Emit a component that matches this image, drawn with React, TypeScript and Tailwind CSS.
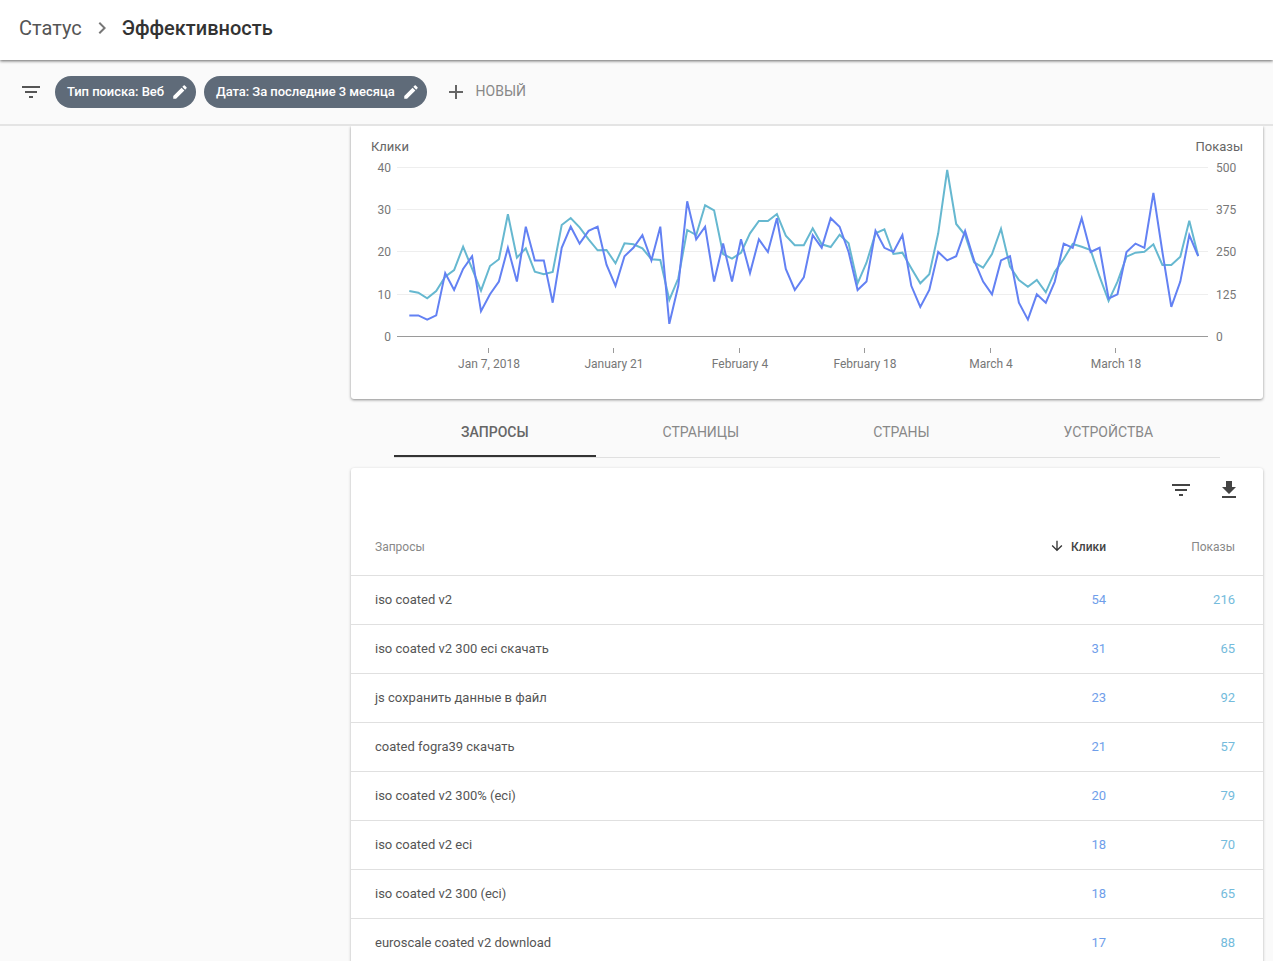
const clicks = [
  5, 5, 4, 5, 15, 11, 16, 19, 6, 10, 13, 21, 13, 26, 18, 18, 8, 21, 26, 22, 25, 26, 17, 12, 19, 21, 24, 18, 26, 3, 12, 32, 23, 26, 13,
  22, 13, 23, 15, 23, 20, 28, 16, 11, 14, 24, 21, 28, 26, 20, 11, 13, 25, 21, 20, 24, 12, 7, 11, 20, 18, 19, 25, 18, 13, 10, 18, 19, 8,
  4, 10, 8, 13, 22, 21, 28, 20, 21, 9, 10, 20, 22, 21, 34, 20, 7, 13, 24, 19,
];

// line height inside the chart, px from the top of the card
const impressions = [
  483, 488, 505, 483, 440, 420, 350, 416, 482, 408, 388, 253, 383, 355, 425, 433, 426, 285, 264, 292, 328, 361, 360, 400, 340, 343, 355,
  388, 390, 510, 445, 300, 315, 226, 241, 372, 386, 368, 310, 273, 273, 252, 317, 346, 346, 295, 343, 351, 314, 340, 460, 398, 310, 298,
  372, 368, 415, 460, 433, 310, 120, 282, 315, 397, 413, 372, 296, 410, 450, 470, 450, 487, 425, 387, 342, 350, 360, 440, 513, 455, 380,
  368, 365, 343, 405, 405, 380, 272, 378,
].map((z) => 4 + z / 3);

const stepX = 8.965;
const startX = 58.3;
const xAt = (i: number) => (startX + i * stepX).toFixed(1);
const clickLine = clicks.map((v, i) => `${xAt(i)},${(210.5 - v * 4.225).toFixed(1)}`).join(' ');
const impressionLine = impressions.map((y, i) => `${xAt(i)},${y.toFixed(1)}`).join(' ');

const grid = [
  { y: 41.5, left: '40', right: '500' },
  { y: 83.5, left: '30', right: '375' },
  { y: 125.5, left: '20', right: '250' },
  { y: 168.5, left: '10', right: '125' },
];

const ticks = [
  { x: 138, label: 'Jan 7, 2018' },
  { x: 263, label: 'January 21' },
  { x: 389, label: 'February 4' },
  { x: 514, label: 'February 18' },
  { x: 640, label: 'March 4' },
  { x: 765, label: 'March 18' },
];

const rows = [
  { query: 'iso coated v2', clicks: 54, views: 216 },
  { query: 'iso coated v2 300 eci скачать', clicks: 31, views: 65 },
  { query: 'js сохранить данные в файл', clicks: 23, views: 92 },
  { query: 'coated fogra39 скачать', clicks: 21, views: 57 },
  { query: 'iso coated v2 300% (eci)', clicks: 20, views: 79 },
  { query: 'iso coated v2 eci', clicks: 18, views: 70 },
  { query: 'iso coated v2 300 (eci)', clicks: 18, views: 65 },
  { query: 'euroscale coated v2 download', clicks: 17, views: 88 },
];

const tabs = ['ЗАПРОСЫ', 'СТРАНИЦЫ', 'СТРАНЫ', 'УСТРОЙСТВА'];

function Icon({ d, className }: { d: string; className: string }) {
  return (
    <svg viewBox="0 0 24 24" className={className} fill="currentColor">
      <path d={d} />
    </svg>
  );
}

const filterPath = 'M10 18h4v-2h-4v2zM3 6v2h18V6H3zm3 7h12v-2H6v2z';
const editPath =
  'M3 17.25V21h3.75L17.81 9.94l-3.75-3.75L3 17.25zM20.71 7.04c.39-.39.39-1.02 0-1.41l-2.34-2.34c-.39-.39-1.02-.39-1.41 0l-1.83 1.83 3.75 3.75 1.83-1.83z';

function Chip({ label }: { label: string }) {
  return (
    <div className="flex h-8 items-center rounded-full bg-[#5f6b79] pl-[12px] pr-[7px] text-[13px] font-medium tracking-[-0.05px] text-white">
      <span>{label}</span>
      <Icon d={editPath} className="ml-[7px] h-[18px] w-[18px]" />
    </div>
  );
}

function Chart() {
  return (
    <div className="h-[273px] w-[912px] rounded-b-[3px] bg-white shadow-[0_1px_3px_rgba(0,0,0,0.45)]">
      <svg width="912" height="273" viewBox="0 0 912 273" className="block" fontFamily="Roboto, sans-serif">
        <text x="20" y="25" fontSize="13" fill="#666">Клики</text>
        <text x="892" y="25" fontSize="13" fill="#666" textAnchor="end">Показы</text>
        {grid.map((g) => (
          <g key={g.left}>
            <line x1="46" x2="857" y1={g.y} y2={g.y} stroke="#eeeeee" />
            <text x="40" y={g.y + 4.5} fontSize="12" fill="#777" textAnchor="end">{g.left}</text>
            <text x="865" y={g.y + 4.5} fontSize="12" fill="#777">{g.right}</text>
          </g>
        ))}
        <line x1="46" x2="857" y1="210.5" y2="210.5" stroke="#9a9a9a" />
        <text x="40" y="215" fontSize="12" fill="#777" textAnchor="end">0</text>
        <text x="865" y="215" fontSize="12" fill="#777">0</text>
        {ticks.map((t) => (
          <g key={t.label}>
            <line x1={t.x - 0.5} x2={t.x - 0.5} y1="222" y2="227" stroke="#9a9a9a" />
            <text x={t.x} y="242" fontSize="12" fill="#777" textAnchor="middle">{t.label}</text>
          </g>
        ))}
        <polyline points={impressionLine} fill="none" stroke="#66b8d0" strokeWidth="2" />
        <polyline points={clickLine} fill="none" stroke="#6381f3" strokeWidth="2" />
      </svg>
    </div>
  );
}

export default function App() {
  return (
    <div className="flex h-[961px] flex-col overflow-hidden bg-[#fafafa] font-['Roboto',sans-serif]">
      <header className="z-20 flex h-[60px] shrink-0 items-center bg-white pb-[4px] pl-[19px] shadow-[0_1px_3px_rgba(0,0,0,0.6)]">
        <span className="text-[20px] text-[#555]">Статус</span>
        <Icon
          d="M10 6L8.59 7.41 13.17 12l-4.58 4.59L10 18l6-6z"
          className="mx-[8px] h-[24px] w-[24px] text-[#777]"
        />
        <span className="text-[20px] font-medium text-[#333]">Эффективность</span>
      </header>

      <div className="z-10 flex h-[66px] shrink-0 items-center border-b-2 border-[#e4e4e4] bg-[#fafafa] pl-[19px]">
        <Icon d={filterPath} className="h-6 w-6 text-[#555]" />
        <div className="ml-3 flex gap-2">
          <Chip label="Тип поиска: Веб" />
          <Chip label="Дата: За последние 3 месяца" />
        </div>
        <Icon d="M19 13h-6v6h-2v-6H5v-2h6V5h2v6h6v2z" className="ml-[17px] h-6 w-6 text-[#666]" />
        <span className="mb-[2px] ml-[8px] text-[14px] text-[#888]">НОВЫЙ</span>
      </div>

      <main className="shrink-0 pl-[351px]">
        <Chart />

        <nav className="ml-[43px] flex h-[59px] w-[826px] border-b border-[#e0e0e0]">
          {tabs.map((tab, i) => (
            <div
              key={tab}
              className={
                i === 0
                  ? 'flex h-[58px] items-center border-b-2 border-[#333] px-[67px] pt-[11px] text-[14px] font-medium text-[#666]'
                  : 'flex h-[58px] items-center border-b-2 border-transparent px-[67px] pt-[11px] text-[14px] text-[#888]'
              }
            >
              {tab}
            </div>
          ))}
        </nav>

        <section className="mt-[10px] w-[912px] rounded-t-[3px] bg-white shadow-[0_1px_3px_rgba(0,0,0,0.3)]">
          <div className="flex h-[34px] items-end justify-end pr-[22px] text-[#444]">
            <Icon d={filterPath} className="h-6 w-6" />
            <Icon
              d="M19 9h-4V3H9v6H5l7 7 7-7zM5 18v2h14v-2H5z"
              className="ml-[24px] h-6 w-6"
            />
          </div>
          <div className="flex h-[73px] items-center pl-6 pr-[28px] pt-[17px] text-[12px]">
            <span className="flex-1 text-[#888]">Запросы</span>
            <span className="flex w-[100px] items-center justify-end font-medium text-[#444]">
              <Icon
                d="M20 12l-1.41-1.41L13 16.17V4h-2v12.17l-5.58-5.59L4 12l8 8 8-8z"
                className="mb-[2px] mr-[6px] h-[16px] w-[16px] text-[#333]"
              />
              Клики
            </span>
            <span className="w-[129px] text-right text-[#888]">Показы</span>
          </div>
          {rows.map((row) => (
            <div key={row.query} className="flex h-[49px] items-center border-t border-[#e0e0e0] pl-6 pr-[28px] text-[13px]">
              <span className="flex-1 text-[#555]">{row.query}</span>
              <span className="w-[100px] text-right text-[#6f9eea]">{row.clicks}</span>
              <span className="w-[129px] text-right text-[#74bbdc]">{row.views}</span>
            </div>
          ))}
        </section>
      </main>
    </div>
  );
}
